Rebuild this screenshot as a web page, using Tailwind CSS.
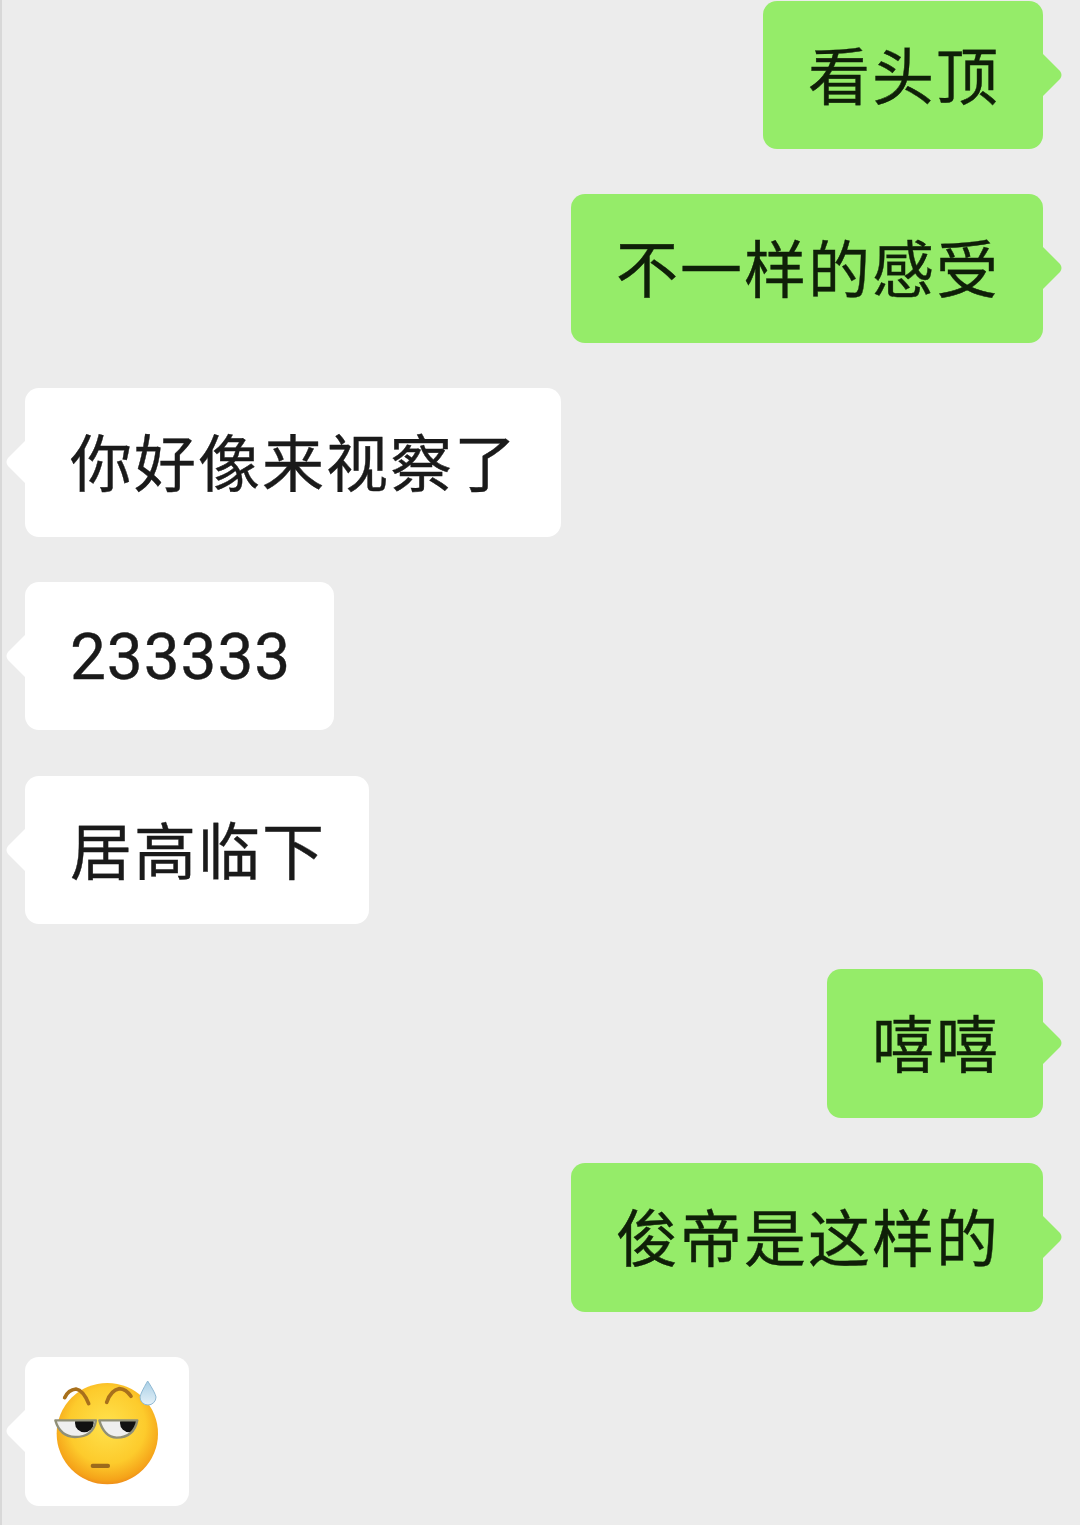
<!DOCTYPE html>
<html lang="zh-CN">
<head>
<meta charset="utf-8">
<script src="https://cdn.jsdelivr.net/npm/@tailwindcss/browser@4"></script>
</head>
<body class="m-0">
<main class="w-[1080px] h-[1525px] overflow-hidden bg-[#ececec] border-l-2 border-l-[#d8d8d8] flex flex-col gap-[45.3px] pt-[0.5px] pl-[23px] pr-[37px] font-['Noto_Sans_CJK_SC',sans-serif] font-normal text-[62px] tracking-[2px] leading-[144px] [-webkit-text-stroke:0.4px_currentColor] text-[#1a1a1a]">

  <div class="relative self-end h-[148.5px] rounded-[14px] bg-[#95ec69] pl-[45px] pr-[43px] text-[#0f1f08]">看头顶
    <svg class="absolute left-full top-[52px] w-[20px] h-[44px]" viewBox="0 0 20 44"><path d="M-1 0 L0 1 L17 18 Q20 22 17 26 L0 43 L-1 44Z" fill="#95ec69"/></svg>
  </div>
  <div class="relative self-end h-[148.5px] rounded-[14px] bg-[#95ec69] pl-[45px] pr-[43px] text-[#0f1f08]">不一样的感受
    <svg class="absolute left-full top-[52px] w-[20px] h-[44px]" viewBox="0 0 20 44"><path d="M-1 0 L0 1 L17 18 Q20 22 17 26 L0 43 L-1 44Z" fill="#95ec69"/></svg>
  </div>
  <div class="relative self-start h-[148.5px] rounded-[14px] bg-white pl-[45px] pr-[43px]">你好像来视察了
    <svg class="absolute right-full top-[52px] w-[20px] h-[44px]" viewBox="0 0 20 44"><path d="M21 0 L20 1 L3 18 Q0 22 3 26 L20 43 L21 44Z" fill="#ffffff"/></svg>
  </div>
  <div class="relative self-start h-[148.5px] rounded-[14px] bg-white pl-[45px] pr-[43px] font-['Roboto','Noto_Sans_CJK_SC',sans-serif] text-[64px] tracking-[0.9px] leading-[152px]">233333
    <svg class="absolute right-full top-[52px] w-[20px] h-[44px]" viewBox="0 0 20 44"><path d="M21 0 L20 1 L3 18 Q0 22 3 26 L20 43 L21 44Z" fill="#ffffff"/></svg>
  </div>
  <div class="relative self-start h-[148.5px] rounded-[14px] bg-white pl-[45px] pr-[43px]">居高临下
    <svg class="absolute right-full top-[52px] w-[20px] h-[44px]" viewBox="0 0 20 44"><path d="M21 0 L20 1 L3 18 Q0 22 3 26 L20 43 L21 44Z" fill="#ffffff"/></svg>
  </div>
  <div class="relative self-end h-[148.5px] rounded-[14px] bg-[#95ec69] pl-[45px] pr-[43px] text-[#0f1f08]">嘻嘻
    <svg class="absolute left-full top-[52px] w-[20px] h-[44px]" viewBox="0 0 20 44"><path d="M-1 0 L0 1 L17 18 Q20 22 17 26 L0 43 L-1 44Z" fill="#95ec69"/></svg>
  </div>
  <div class="relative self-end h-[148.5px] rounded-[14px] bg-[#95ec69] pl-[45px] pr-[43px] text-[#0f1f08]">俊帝是这样的
    <svg class="absolute left-full top-[52px] w-[20px] h-[44px]" viewBox="0 0 20 44"><path d="M-1 0 L0 1 L17 18 Q20 22 17 26 L0 43 L-1 44Z" fill="#95ec69"/></svg>
  </div>
  <div class="relative self-start w-[164px] h-[148.5px] rounded-[14px] bg-white">
    <svg class="absolute right-full top-[52px] w-[20px] h-[44px]" viewBox="0 0 20 44"><path d="M21 0 L20 1 L3 18 Q0 22 3 26 L20 43 L21 44Z" fill="#ffffff"/></svg>
    <svg class="block w-[164px] h-[148.5px]" viewBox="75 50 492 445.5">
      <defs>
        <radialGradient id="f" cx="0.5" cy="0.42" r="0.58">
          <stop offset="0" stop-color="#ffe24d"/>
          <stop offset="0.65" stop-color="#fdcb2c"/>
          <stop offset="0.93" stop-color="#f5a319"/>
          <stop offset="1" stop-color="#ef8f1a"/>
        </radialGradient>
        <linearGradient id="d" x1="0" y1="0" x2="0" y2="1">
          <stop offset="0" stop-color="#a9cfe6"/>
          <stop offset="1" stop-color="#e4f1f8"/>
        </linearGradient>
        <clipPath id="l"><path d="M166 240 H288 Q280 290 225 290 Q180 288 166 240Z"/></clipPath>
        <clipPath id="r"><path d="M298 240 H412 Q402 292 350 292 Q312 290 298 240Z"/></clipPath>
      </defs>
      <circle cx="322" cy="280" r="152" fill="url(#f)"/>
      <path d="M194 172 Q205 148 228 146 Q250 150 266 190" fill="none" stroke="#a8701c" stroke-width="11" stroke-linecap="round"/>
      <path d="M320 186 Q332 150 358 145 Q378 146 393 168" fill="none" stroke="#a8701c" stroke-width="11" stroke-linecap="round"/>
      <path d="M166 240 H288 Q280 290 225 290 Q180 288 166 240Z" fill="#efefef"/>
      <path d="M298 240 H412 Q402 292 350 292 Q312 290 298 240Z" fill="#efefef"/>
      <circle cx="253" cy="248" r="28" fill="#111" clip-path="url(#l)"/>
      <circle cx="388" cy="248" r="28" fill="#111" clip-path="url(#r)"/>
      <path d="M166 240 H288 Q280 290 225 290 Q180 288 166 240Z" fill="none" stroke="#8f8f78" stroke-width="7" stroke-linejoin="round"/>
      <path d="M298 240 H412 Q402 292 350 292 Q312 290 298 240Z" fill="none" stroke="#8f8f78" stroke-width="7" stroke-linejoin="round"/>
      <rect x="272" y="370" width="58" height="13" rx="6" fill="#9c6a1c"/>
      <path d="M443 122 Q466 158 468 170 A24 24 0 1 1 420 170 Q422 158 443 122Z" fill="url(#d)" stroke="#8fb9d3" stroke-width="3"/>
    </svg>
  </div>
</main>
</body>
</html>
